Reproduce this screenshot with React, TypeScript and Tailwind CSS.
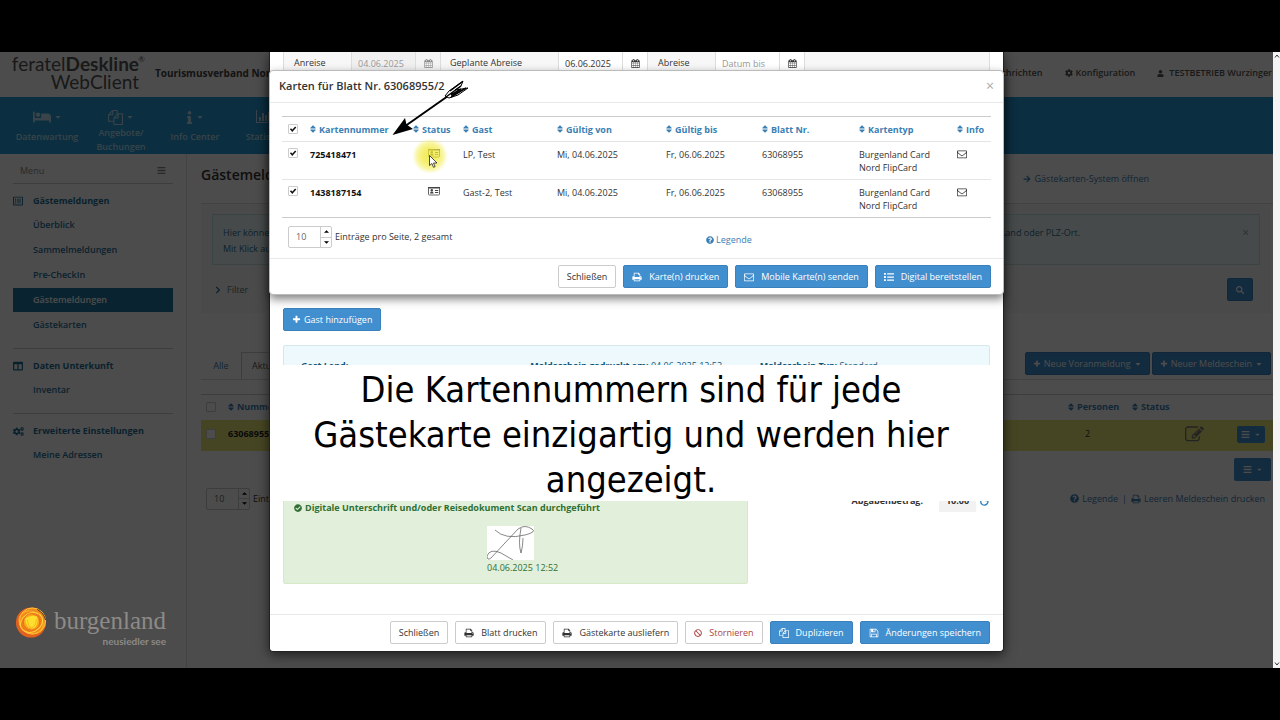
import React from 'react';
import {
  FaArrowRight,
  FaBan,
  FaBars,
  FaBed,
  FaCaretDown,
  FaCheckCircle,
  FaChevronRight,
  FaCog,
  FaCogs,
  FaColumns,
  FaInfo,
  FaList,
  FaQuestionCircle,
  FaRegListAlt,
  FaSearch,
  FaSort,
  FaUser,
} from 'react-icons/fa';

// Icons on a 1792 grid
const ICON_PATHS = {
  print:
    'M448 1536h896v-256h-896v256zm0-640h896v-384h-160q-40 0-68-28t-28-68v-160h-640v640zm1152 64q0-26-19-45t-45-19-45 19-19 45 19 45 45 19 45-19 19-45zm128 0v416q0 13-9.5 22.5t-22.5 9.5h-224v160q0 40-28 68t-68 28h-960q-40 0-68-28t-28-68v-160h-224q-13 0-22.5-9.5t-9.5-22.5v-416q0-79 56.5-135.5t135.5-56.5h64v-544q0-40 28-68t68-28h672q40 0 88 20t76 48l152 152q28 28 48 76t20 88v256h64q79 0 135.5 56.5t56.5 135.5z',
  files:
    'M1696 384q40 0 68 28t28 68v1216q0 40-28 68t-68 28h-960q-40 0-68-28t-28-68v-288h-544q-40 0-68-28t-28-68v-672q0-40 20-88t48-76l408-408q28-28 76-48t88-20h416q40 0 68 28t28 68v328q68-40 128-40h416zm-544 213l-299 299h299v-299zm-640-384l-299 299h299v-299zm196 647l316-316v-416h-384v416q0 40-28 68t-68 28h-416v640h512v-256q0-40 20-88t48-76zm956 804v-1152h-384v416q0 40-28 68t-68 28h-416v640h896z',
  save:
    'M512 1536h768v-384h-768v384zm896 0h128v-896q0-14-10-38.5t-20-34.5l-281-281q-10-10-34-20t-39-10v416q0 40-28 68t-68 28h-576q-40 0-68-28t-28-68v-416h-128v1280h128v-416q0-40 28-68t68-28h832q40 0 68 28t28 68v416zm-384-928v-320q0-13-9.5-22.5t-22.5-9.5h-192q-13 0-22.5 9.5t-9.5 22.5v320q0 13 9.500 22.500t22.500 9.500h192q13 0 22.500-9.500t9.500-22.500zm640 32v928q0 40-28 68t-68 28h-1344q-40 0-68-28t-28-68v-1344q0-40 28-68t68-28h928q40 0 88 20t76 48l280 280q28 28 48 76t20 88z',
  envelope:
    'M1664 1504v-768q-32 36-69 66-268 206-426 338-51 43-83 67t-86.5 48.5-102.5 24.5h-2q-48 0-102.5-24.5t-86.5-48.5-83-67q-158-132-426-338-37-30-69-66v768q0 13 9.5 22.5t22.5 9.5h1472q13 0 22.5-9.5t9.5-22.5zm0-1051v-24.5l-.5-13-3-12.5-5.5-9-9-7.5-14-2.5h-1472q-13 0-22.5 9.5t-9.5 22.5q0 168 147 284 193 152 401 317 6 5 35 29.5t46 37.5 44.5 31.5 50.5 27.5 43 9h2q20 0 43-9t50.5-27.5 44.5-31.5 46-37.5 35-29.5q208-165 401-317 54-43 100.5-115.5t46.5-131.5zm128-37v1088q0 66-47 113t-113 47h-1472q-66 0-113-47t-47-113v-1088q0-66 47-113t113-47h1472q66 0 113 47t47 113z',
  calendar:
    'M192 1664h288v-288h-288v288zm352 0h320v-288h-320v288zm-352-352h288v-320h-288v320zm352 0h320v-320h-320v320zm-352-384h288v-288h-288v288zm736 736h320v-288h-320v288zm-384-736h320v-288h-320v288zm768 736h288v-288h-288v288zm-384-352h320v-320h-320v320zm-352-864v-288q0-13-9.5-22.5t-22.5-9.5h-64q-13 0-22.5 9.5t-9.5 22.5v288q0 13 9.5 22.5t22.5 9.5h64q13 0 22.5-9.5t9.5-22.5zm736 864h288v-320h-288v320zm-384-384h320v-288h-320v288zm384 0h288v-288h-288v288zm32-480v-288q0-13-9.5-22.5t-22.5-9.5h-64q-13 0-22.5 9.5t-9.5 22.5v288q0 13 9.5 22.5t22.5 9.5h64q13 0 22.5-9.5t9.5-22.5zm384-64v1280q0 52-38 90t-90 38h-1408q-52 0-90-38t-38-90v-1280q0-52 38-90t90-38h128v-96q0-66 47-113t113-47h64q66 0 113 47t47 113v96h384v-96q0-66 47-113t113-47h64q66 0 113 47t47 113v96h128q52 0 90 38t38 90z',
  edit:
    'M888 1184l116-116-152-152-116 116v56h96v96h56zm440-720q-16-16-33 1l-350 350q-17 17-1 33t33-1l350-350q17-17 1-33zm80 594v190q0 119-84.5 203.5t-203.5 84.5h-832q-119 0-203.5-84.5t-84.5-203.5v-832q0-119 84.5-203.5t203.5-84.5h832q63 0 117 25 15 7 18 23 3 17-9 29l-49 49q-14 14-32 8-23-6-45-6h-832q-66 0-113 47t-47 113v832q0 66 47 113t113 47h832q66 0 113-47t47-113v-126q0-13 9-22l64-64q15-15 35-7t20 29zm-96-738l288 288-672 672h-288v-288zm444 132l-92 92-288-288 92-92q28-28 68-28t68 28l152 152q28 28 28 68t-28 68z',
  plus:
    'M1600 736v192q0 40-28 68t-68 28h-416v416q0 40-28 68t-68 28h-192q-40 0-68-28t-28-68v-416h-416q-40 0-68-28t-28-68v-192q0-40 28-68t68-28h416v-416q0-40 28-68t68-28h192q40 0 68 28t28 68v416h416q40 0 68 28t28 68z',
};

const Glyph = ({ name, className }: { name: keyof typeof ICON_PATHS; className?: string }) => (
  <svg viewBox="0 0 1792 1792" fill="currentColor" className={`shrink-0 ${className ?? 'size-[10px]'}`}>
    <path d={ICON_PATHS[name]} />
  </svg>
);

const ChartIcon = () => (
  <svg viewBox="0 0 16 14" fill="currentColor" className="h-[14px] w-4">
    <path d="M0 0h1v12h15v1H0zM3 7h2v4H3zM6 3h2v8H6zM9 5h2v6H9zM12 2h2v9h-2z" />
  </svg>
);

const IdCardIcon = () => (
  <svg viewBox="0 0 12 10" className="h-[10px] w-3">
    <rect x="0.5" y="1.5" width="11" height="7.5" rx="0.8" fill="none" stroke="#666" />
    <path d="M0 1h12v1.500H0z" fill="#444" />
    <circle cx="3.800" cy="4.300" r="1.200" fill="#444" />
    <path d="M2 7.500q0-2 1.800-2t1.800 2zM7 4h3.200v1H7zM7 6h3.200v1H7z" fill="#444" />
  </svg>
);

interface ButtonProps {
  variant?: 'default' | 'primary' | 'danger';
  icon?: React.ReactNode;
  children: React.ReactNode;
}

const BUTTON_STYLES = {
  default: 'border-[#ccc] bg-white text-[#333]',
  primary: 'border-[#3a80bd] bg-[#428fd0] text-white',
  danger: 'border-[#ccc] bg-white text-[#a94442]',
};

const Button: React.FC<ButtonProps> = ({ variant = 'default', icon, children }) => (
  <button
    type="button"
    className={`flex h-[23px] items-center gap-[7px] rounded-[2px] border px-2 whitespace-nowrap ${BUTTON_STYLES[variant]}`}
  >
    {icon}
    {children}
  </button>
);

const SortLabel = ({ children }: { children: React.ReactNode }) => (
  <a href="#" className="flex items-center gap-[3px] text-[#3a80b5]">
    <FaSort className="h-[10px] w-[6px] shrink-0" />
    {children}
  </a>
);

const PageSize = ({ id, label }: { id: string; label: string }) => (
  <div className="flex h-[22px] items-center">
    <span className="flex h-full w-[44px] rounded-[2px] border border-[#ccc]">
      <input id={id} defaultValue="10" className="w-[31px] pl-[7px] text-[#666] outline-none" />
      <span className="flex flex-1 flex-col border-l border-[#ccc] text-black">
        <button type="button" aria-label="Mehr" className="flex flex-1 items-center justify-center border-b border-[#ccc]">
          <svg viewBox="0 0 6 3" className="h-[3px] w-[5px]"><path d="M0 3l3-3 3 3z" /></svg>
        </button>
        <button type="button" aria-label="Weniger" className="flex flex-1 items-center justify-center">
          <svg viewBox="0 0 6 3" className="h-[3px] w-[5px]"><path d="M0 0l3 3 3-3z" /></svg>
        </button>
      </span>
    </span>
    <label htmlFor={id} className="ml-[3px] whitespace-nowrap">{label}</label>
  </div>
);

const Checkbox = ({ label, checked }: { label: string; checked?: boolean }) => (
  <span className="relative block size-[10px]">
    <input
      type="checkbox"
      aria-label={label}
      defaultChecked={checked}
      className="peer block size-[10px] appearance-none rounded-[1px] border border-[#ccc] bg-white"
    />
    <svg viewBox="0 0 10 10" className="pointer-events-none absolute inset-0 hidden size-[10px] peer-checked:block">
      <path d="M2.500 4.800L4.300 6.800L7.700 3" fill="none" stroke="#111" strokeWidth="1.500" />
    </svg>
  </span>
);

const NAV_ITEMS = [
  { label: 'Datenwartung', icon: <FaBed className="h-4 w-[18px]" /> },
  { label: 'Angebote/ Buchungen', icon: <Glyph name="files" className="size-[15px]" /> },
  { label: 'Info Center', icon: <FaInfo className="h-[13px] w-[7px]" /> },
  { label: 'Statistiken', icon: <ChartIcon /> },
];

const SIDEBAR = [
  {
    title: 'Gästemeldungen',
    icon: <FaRegListAlt className="size-[10px]" />,
    items: ['Überblick', 'Sammelmeldungen', 'Pre-CheckIn', 'Gästemeldungen', 'Gästekarten'],
    active: 3,
  },
  { title: 'Daten Unterkunft', icon: <FaColumns className="size-[10px]" />, items: ['Inventar'], active: -1 },
  { title: 'Erweiterte Einstellungen', icon: <FaCogs className="size-[11px]" />, items: ['Meine Adressen'], active: -1 },
];

const TopBar = () => (
  <header className="flex h-[45px] items-start justify-between pr-px">
    <div className="flex">
      <div className="flex w-[145px] flex-col items-end pt-[3px] pr-[6px] font-['Lato',sans-serif] text-[19px] leading-[18px] text-[#555]">
        <div className="relative whitespace-nowrap">
          feratel<b>Deskline</b>
          <span className="absolute -right-[6px] top-0 text-[8px] leading-[8px]">®</span>
        </div>
        <div>WebClient</div>
      </div>
      <div className="pt-[14px] pl-[10px] text-[10px] font-bold leading-[14px] whitespace-nowrap text-[#444]">
        Tourismusverband Nordburgenland
      </div>
    </div>
    <div className="flex gap-[22px] pt-[14px] font-semibold whitespace-nowrap text-[#555]">
      <a href="#">Nachrichten</a>
      <a href="#" className="flex items-center gap-[3px]"><FaCog className="size-2" />Konfiguration</a>
      <a href="#" className="flex items-center gap-[5px]"><FaUser className="size-[7px]" />TESTBETRIEB Wurzinger</a>
    </div>
  </header>
);

const Sidebar = () => (
  <aside className="w-[187px] shrink-0 border-r border-[#e0e0e0] px-[13px] text-[#1f7098]">
    <div className="flex h-[30px] items-center justify-between border-b border-[#ccc] px-[7px] pt-1 text-[#888]">
      Menu
      <FaBars className="size-[9px]" />
    </div>
    {SIDEBAR.map((group) => (
      <nav key={group.title} className="border-b border-[#ccc] pt-[5px] pb-[10px] font-semibold last:border-0">
        <div className="flex h-6 items-center font-bold">
          <span className="w-5">{group.icon}</span>
          <span className="whitespace-nowrap">{group.title}</span>
        </div>
        {group.items.map((item, i) => (
          <a
            key={item}
            href="#"
            className={`mb-px flex h-6 items-center pl-5 ${i === group.active ? 'bg-[#2179a0] text-white' : ''}`}
          >
            {item}
          </a>
        ))}
      </nav>
    ))}
  </aside>
);

const Content = () => (
  <section className="min-w-0 flex-1 pl-[14px]">
    <div className="flex h-[50px] items-start justify-between border-b border-[#ddd] pt-[14px] pr-[124px]">
      <h1 className="text-[14px] font-semibold text-[#333]">Gästemeldungen</h1>
      <a href="#" className="flex items-center gap-1 pt-1 text-[#3a80b5]">
        <FaArrowRight className="size-2" />
        Gästekarten-System öffnen
      </a>
    </div>
    <div className="mr-[2px] bg-[#f8f8f8] px-[11px] pt-[10px] pb-3">
      <div className="flex h-[51px] justify-between border border-[#c5e5e5] bg-[#eef9fa] px-[10px] pt-[10px] leading-4 text-[#31708f]">
        <div className="whitespace-nowrap">
          <p>Hier können Sie nach Gästemeldungen suchen.</p>
          <p>Mit Klick auf Filter öffnen Sie weitere Felder.</p>
        </div>
        <div className="flex gap-[162px]">
          <span>Name, Land oder PLZ-Ort.</span>
          <button type="button" aria-label="Hinweis schließen" className="h-4 text-[12px] text-[#999]">×</button>
        </div>
      </div>
      <div className="mt-[13px] flex items-center justify-between pr-[7px] pl-[2px]">
        <button type="button" className="flex items-center gap-[5px] text-[#577]">
          <FaChevronRight className="size-2 text-[#2a6a90]" />
          Filter
        </button>
        <button type="button" aria-label="Suchen" className="flex h-[23px] w-[26px] items-center justify-center rounded-[2px] border border-[#3a80bd] bg-[#428fd0] text-white">
          <FaSearch className="size-2" />
        </button>
      </div>
    </div>

    <div className="mt-[38px] flex h-[29px] items-end justify-between border-b border-[#ddd]">
      <div className="flex">
        <a href="#" className="flex h-[27px] w-10 items-center justify-center text-[#3a80b5]">Alle</a>
        <a href="#" className="flex h-[27px] items-center border border-b-0 border-[#ccc] px-[10px] text-[#555]">Aktuelle</a>
      </div>
      <div className="mb-1 flex gap-[2px] pr-[2px]">
        {['Neue Voranmeldung', 'Neuer Meldeschein'].map((label) => (
          <button
            key={label}
            type="button"
            className="flex h-[23px] items-center gap-[3px] rounded-[2px] border border-[#3a80bd] bg-[#428fd0] px-[7px] whitespace-nowrap text-white"
          >
            <Glyph name="plus" className="size-2" />
            {label}
            <FaCaretDown className="size-2" />
          </button>
        ))}
      </div>
    </div>

    <table className="mt-[14px] w-full table-fixed border-t border-[#ccc] text-left">
      <colgroup>
        <col className="w-[27px]" />
        <col />
        <col className="w-[64px]" />
        <col className="w-[75px]" />
        <col className="w-[66px]" />
      </colgroup>
      <thead>
        <tr className="h-[25px]">
          <th className="pl-[5px]"><Checkbox label="Alle auswählen" /></th>
          <th><SortLabel>Nummer</SortLabel></th>
          <th><SortLabel>Personen</SortLabel></th>
          <th><SortLabel>Status</SortLabel></th>
          <th />
        </tr>
      </thead>
      <tbody>
        <tr className="h-[31px] bg-[#ebe775] *:pb-[2px]">
          <td className="pl-[5px]"><Checkbox label="63068955" /></td>
          <td className="font-bold text-[#222]">63068955/2</td>
          <td className="pl-[17px]">2</td>
          <td className="pr-[3px]"><Glyph name="edit" className="ml-auto size-[19px] text-[#777]" /></td>
          <td>
            <button type="button" aria-label="Aktionen" className="mr-2 ml-auto flex h-[17px] w-7 items-center justify-center gap-1 rounded-[2px] bg-[#428fd0] text-white">
              <FaBars className="size-[9px]" />
              <FaCaretDown className="size-[7px]" />
            </button>
          </td>
        </tr>
      </tbody>
    </table>
    <button type="button" aria-label="Alle Aktionen" className="mt-[7px] mr-[2px] ml-auto flex h-[23px] w-[37px] items-center justify-center gap-1 rounded-[2px] bg-[#428fd0] text-white">
      <FaBars className="size-[9px]" />
      <FaCaretDown className="size-[7px]" />
    </button>
    <div className="mt-[7px] flex items-center justify-between pr-2 pl-[5px]">
      <PageSize id="sheet-page-size" label="Einträge pro Seite" />
      <div className="flex items-center gap-1 text-[#3a80b5]">
        <a href="#" className="flex items-center gap-[3px]"><FaQuestionCircle className="size-[9px]" />Legende</a>
        <span>|</span>
        <a href="#" className="flex items-center gap-[3px]"><Glyph name="print" />Leeren Meldeschein drucken</a>
      </div>
    </div>
  </section>
);

const BurgenlandLogo = () => (
  <div className="absolute bottom-[21px] left-[15px] flex items-start gap-[6px]">
    <svg viewBox="0 0 34 34" className="size-[33px]">
      <circle cx="16.500" cy="17" r="15.500" fill="#e2611f" />
      <circle cx="18" cy="15.500" r="13.500" fill="#f08a1c" stroke="#ffc63a" />
      <ellipse cx="16.500" cy="17" rx="13" ry="11" fill="none" stroke="#f9b32c" transform="rotate(35 17 17)" />
      <ellipse cx="17" cy="17" rx="12" ry="9.500" fill="#ee7d1b" stroke="#ffd23c" transform="rotate(-30 17 17)" />
      <circle cx="17" cy="16.500" r="8.500" fill="#f9a51d" stroke="#e9701c" />
      <path d="M10.500 13q6-4.500 12.500-2 1.500 9-4 12-8 1-8.500-10z" fill="#ffdf2e" />
      <path d="M13 14q0 7 4 8.500 5-2 5-9" fill="none" stroke="#f7b51c" />
      <path d="M23 3.500q7 4 8.500 11" fill="none" stroke="#40302a" />
    </svg>
    <div className="flex flex-col items-end text-[#8d8a87]">
      <span className="font-['Liberation_Serif',serif] text-[25px] leading-[29px]">burgenland</span>
      <span className="font-['Lato',sans-serif] text-[10px] font-bold leading-[12px]">neusiedler see</span>
    </div>
  </div>
);

const FIELD = 'h-6 border border-[#ddd] px-[6px] outline-none';
const ADDON = 'flex h-6 w-[25px] items-center justify-center border border-l-0 border-[#ddd]';

const SheetDialog = () => (
  <div className="flex w-full flex-col rounded-b-[4px] border border-t-0 border-[#222] bg-white shadow-[0_3px_12px_rgba(0,0,0,0.6)]">
    <div className="px-[13px]">
      <div className="flex h-[22px] items-center border-x border-[#ddd] bg-[#f7f7f7] pl-[10px]">
        <label htmlFor="arrival" className="w-[57px]">Anreise</label>
        <input id="arrival" disabled defaultValue="04.06.2025" className={`${FIELD} w-[65px] bg-[#f0f0f0] text-[#999]`} />
        <button type="button" aria-label="Anreise wählen" className={`${ADDON} bg-[#f4f4f4] text-[#888]`}><Glyph name="calendar" className="size-[9px]" /></button>
        <label htmlFor="planned" className="w-[117px] pl-[9px]">Geplante Abreise</label>
        <input id="planned" defaultValue="06.06.2025" className={`${FIELD} w-[65px] bg-white`} />
        <button type="button" aria-label="Geplante Abreise wählen" className={`${ADDON} bg-white`}><Glyph name="calendar" className="size-[9px]" /></button>
        <label htmlFor="departure" className="w-[67px] pl-[10px]">Abreise</label>
        <input id="departure" placeholder="Datum bis" className={`${FIELD} w-[65px] bg-white placeholder:text-[#999]`} />
        <button type="button" aria-label="Abreise wählen" className={`${ADDON} bg-white`}><Glyph name="calendar" className="size-[9px]" /></button>
      </div>
      <div className="mt-[234px] flex">
        <button type="button" className="flex h-[23px] items-center gap-[3px] rounded-[2px] border border-[#3a80bd] bg-[#428fd0] px-[8px] text-white">
          <Glyph name="plus" className="size-[9px]" />
          Gast hinzufügen
        </button>
      </div>
      <div className="mt-[14px] grid h-[115px] grid-cols-3 rounded-[2px] border border-[#d5e8ee] bg-[#eef9fe] pt-[13px] pl-[17px] leading-[13px] text-[#0f5575]">
        <span><b>Gast Land:</b></span>
        <span className="whitespace-nowrap"><b>Meldeschein gedruckt am:</b> 04.06.2025 12:52</span>
        <span><b>Meldeschein Typ:</b> Standard</span>
      </div>
      <div className="mt-[30px] flex items-start justify-between">
        <div className="w-[465px] rounded-b-[2px] border border-[#d6e9c6] bg-[#e2efda] px-[10px] pt-[10px] pb-[9px] leading-[13px] text-[#2f6f33]">
          <div className="flex items-center gap-[3px] font-bold">
            <FaCheckCircle className="size-2" />
            Digitale Unterschrift und/oder Reisedokument Scan durchgeführt
          </div>
          <div className="mt-[12px] ml-[193px]">
            <svg viewBox="0 0 47 34" className="h-[34px] w-[47px] bg-white">
              <path d="M8 4Q18 14 38 9Q50 6 45 3Q38-2 31 3L4 32Q0 35 0 30Q3 22 14 27L26 34M34 2Q31 18 34 27Q36 20 36 12" fill="none" stroke="#555" strokeWidth="0.700" />
            </svg>
            <div className="mt-px">04.06.2025 12:52</div>
          </div>
        </div>
        <div className="flex items-center font-bold">
          <span>Abgabenbetrag:</span>
          <span className="ml-4 flex h-[22px] w-[37px] items-center justify-center bg-[#f2f2f2]">10.00</span>
          <svg viewBox="0 0 10 10" className="mr-px ml-1 size-[9px]"><path d="M8.500 3.500A4 4 0 1 1 5 1M8.500 1v3h-3" fill="none" stroke="#2f83bd" strokeWidth="1.500" /></svg>
        </div>
      </div>
    </div>
    <footer className="mt-[30px] flex justify-end gap-[7px] border-t border-[#e8e8e8] px-[13px] pt-[6px] pb-[7px]">
      <Button>Schließen</Button>
      <Button icon={<Glyph name="print" />}>Blatt drucken</Button>
      <Button icon={<Glyph name="print" />}>Gästekarte ausliefern</Button>
      <Button variant="danger" icon={<FaBan className="size-2" />}>Stornieren</Button>
      <Button variant="primary" icon={<Glyph name="files" />}>Duplizieren</Button>
      <Button variant="primary" icon={<Glyph name="save" />}>Änderungen speichern</Button>
    </footer>
  </div>
);

const CARDS = [
  { number: '725418471', guest: 'LP, Test' },
  { number: '1438187154', guest: 'Gast-2, Test' },
];

const COLUMNS = ['Kartennummer', 'Status', 'Gast', 'Gültig von', 'Gültig bis', 'Blatt Nr.', 'Kartentyp', 'Info'];

const CardsDialog = () => (
  <div className="absolute inset-x-0 top-[18px] rounded-[4px] border border-[#bbb] bg-white shadow-[0_4px_10px_rgba(0,0,0,0.5)]">
    <header className="flex h-8 items-center justify-between border-b border-[#e8e8e8] px-[9px] pb-px">
      <h2 className="text-[11px] font-semibold text-[#333]">Karten für Blatt Nr. 63068955/2</h2>
      <button type="button" aria-label="Schließen" className="text-[14px] leading-none text-[#aaa]">×</button>
    </header>
    <div className="px-3 pt-[13px]">
      <table className="w-full table-fixed border-y border-[#ccc] text-left leading-[13px]">
        <colgroup>
          <col className="w-[28px]" />
          <col className="w-[103px]" />
          <col className="w-[50px]" />
          <col className="w-[94px]" />
          <col className="w-[109px]" />
          <col className="w-[96px]" />
          <col className="w-[97px]" />
          <col className="w-[98px]" />
          <col />
        </colgroup>
        <thead>
          <tr className="h-[25px]">
            <th className="pl-[6px]"><Checkbox label="Alle Karten auswählen" checked /></th>
            {COLUMNS.map((col) => (
              <th key={col}><SortLabel>{col}</SortLabel></th>
            ))}
          </tr>
        </thead>
        <tbody>
          {CARDS.map((card) => (
            <tr key={card.number} className="h-[38px] border-t border-[#e5e5e5] align-top *:pt-[6px]">
              <td className="pl-[6px]"><Checkbox label={card.number} checked /></td>
              <td className="font-bold text-[#111]">{card.number}</td>
              <td className="pl-[15px]"><IdCardIcon /></td>
              <td>{card.guest}</td>
              <td>Mi, 04.06.2025</td>
              <td>Fr, 06.06.2025</td>
              <td>63068955</td>
              <td>Burgenland Card<br />Nord FlipCard</td>
              <td><Glyph name="envelope" className="mt-px size-[10px]" /></td>
            </tr>
          ))}
        </tbody>
      </table>
      <div className="flex items-start pt-2 pb-[10px] pl-[6px]">
        <div className="w-[418px]">
          <PageSize id="cards-page-size" label="Einträge pro Seite, 2 gesamt" />
        </div>
        <a href="#" className="mt-[7px] flex items-center gap-[2px] text-[#3a80b5]">
          <FaQuestionCircle className="size-2" />
          Legende
        </a>
      </div>
    </div>
    <footer className="flex justify-end gap-[7px] border-t border-[#e8e8e8] px-3 pt-[6px] pb-[6px]">
      <Button>Schließen</Button>
      <Button variant="primary" icon={<Glyph name="print" />}>Karte(n) drucken</Button>
      <Button variant="primary" icon={<Glyph name="envelope" />}>Mobile Karte(n) senden</Button>
      <Button variant="primary" icon={<FaList className="size-[10px]" />}>Digital bereitstellen</Button>
    </footer>

    {/* Pointer highlight, cursor and arrow */}
    <div className="pointer-events-none absolute top-[67px] left-[142px] size-9 rounded-full bg-[radial-gradient(circle,rgba(240,232,50,0.75)_25%,rgba(244,238,90,0.6)_50%,transparent_70%)]" />
    <svg viewBox="0 0 9 13" className="pointer-events-none absolute top-[84px] left-[159px] h-[13px] w-[9px]">
      <path d="M0.500 0.500v10l2.400-2 1.600 3.800 1.600-.700-1.600-3.600h3.500z" fill="#fff" stroke="#222" strokeWidth="0.800" />
    </svg>
    <svg viewBox="0 0 80 60" className="pointer-events-none absolute top-[7px] left-[121px] h-[60px] w-20">
      <path d="M1.500 57L14 40L15.500 46.500L22 51z" fill="#000" />
      <path d="M15 47.500L57 18" stroke="#000" strokeWidth="2" />
      <path d="M54 18L58 13L72 3L70 8L64 12L77 10L67 17L58 20z" fill="#fff" stroke="#000" strokeWidth="1" />
      <path d="M55 19L70 8M59 13L71 4M60 19L75 10M60 17L70 11" stroke="#000" strokeWidth="1.500" />
    </svg>
  </div>
);

export default function App() {
  return (
    <div className="flex min-h-screen flex-col bg-black font-['Open_Sans',sans-serif] text-[9px] leading-[14px] text-[#333]">
      <div className="h-[52px]" />
      <main className="relative flex flex-1 overflow-hidden bg-white">
        <div className="flex min-w-0 flex-1 flex-col">
          <TopBar />
          <nav className="flex h-[57px] bg-[#259cd5] pl-[10px] font-semibold text-white/70">
            {NAV_ITEMS.map((item) => (
              <a key={item.label} href="#" className="flex w-[74px] flex-col items-center px-2 pt-[11px] text-center">
                <span className="flex h-[18px] items-center gap-[3px]">
                  {item.icon}
                  <FaCaretDown className="size-2" />
                </span>
                <span className="flex min-h-[22px] items-center">{item.label}</span>
              </a>
            ))}
          </nav>
          <div className="flex flex-1">
            <Sidebar />
            <Content />
          </div>
        </div>
        <div className="z-20 flex w-[7px] flex-col items-center justify-between bg-[#f4f4f4] py-[2px]">
          <svg viewBox="0 0 6 4" className="h-1 w-[6px]"><path d="M1 3.500l2-2.500 2 2.500" fill="none" stroke="#333" /></svg>
          <svg viewBox="0 0 6 4" className="h-1 w-[6px]"><path d="M1 .5l2 2.500 2-2.500" fill="none" stroke="#333" /></svg>
        </div>

        <div className="absolute inset-y-0 right-[7px] left-0 bg-black/70" />
        <BurgenlandLogo />

        <div className="absolute top-0 right-[7px] left-0 mx-auto w-[735px]">
          <SheetDialog />
          <CardsDialog />
          <p className="absolute top-[313px] right-[14px] left-[3px] flex h-[136px] items-center justify-center bg-white px-8 pt-[3px] text-center font-['DejaVu_Sans_Condensed','Noto_Sans',sans-serif] text-[36px] leading-[45px] text-black">
            Die Kartennummern sind für jede Gästekarte einzigartig und werden hier angezeigt.
          </p>
        </div>
      </main>
      <div className="h-[52px]" />
    </div>
  );
}
